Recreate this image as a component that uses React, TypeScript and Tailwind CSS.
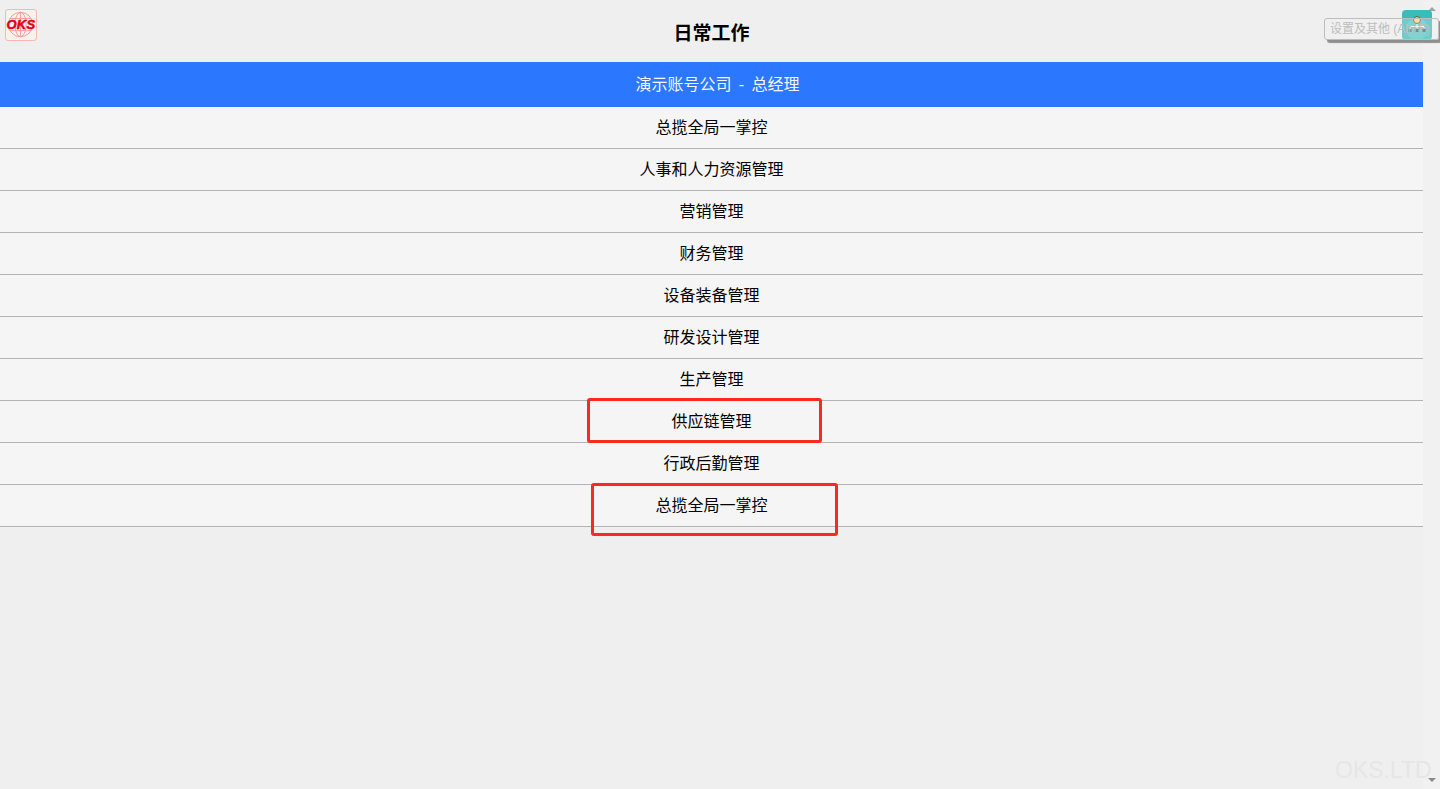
const FONT = "font-['Liberation_Sans','Noto_Sans_CJK_SC',sans-serif]"

const menuItems = [
  '总揽全局一掌控',
  '人事和人力资源管理',
  '营销管理',
  '财务管理',
  '设备装备管理',
  '研发设计管理',
  '生产管理',
  '供应链管理',
  '行政后勤管理',
  '总揽全局一掌控',
]

function Logo() {
  return (
    <div className="relative h-[32px] w-[32px] overflow-hidden rounded-[3px] border border-[#f8b8b0] bg-[#f6f2f0]">
      <svg viewBox="0 0 32 32" className="absolute inset-0 h-full w-full" fill="none" stroke="#f19a9a" strokeWidth="1">
        <circle cx="15.5" cy="15.5" r="13" />
        <ellipse cx="15.5" cy="15.5" rx="6" ry="13" />
        <path d="M15.5 2.5v26M4 9h23M4 22h23" />
      </svg>
      <span className="absolute inset-x-0 top-[7px] text-center font-['Liberation_Sans'] text-[13px] leading-[16px] font-bold italic tracking-[0.3px] text-[#e60012] [-webkit-text-stroke:0.5px_#e60012]">
        OKS
      </span>
    </div>
  )
}

function HelperIcon() {
  return (
    <svg viewBox="0 0 30 30" className="absolute left-[1402px] top-[10px] h-[30px] w-[30px]" fill="none">
      <rect width="30" height="30" rx="4" fill="#2db8b8" fillOpacity="0.95" />
      <circle cx="15" cy="19" r="11" fill="#62caca" fillOpacity="0.6" />
      <circle cx="15" cy="10" r="3.5" fill="#f6d67a" stroke="#6b5a2a" strokeWidth="1" />
      <path d="M15 14v2M8 16.5h14M8 17v2M15 17v2M22 17v2" stroke="#fff" strokeWidth="1" />
      <path d="M6.5 19h3v3h-3zM13.5 19h3v3h-3zM20.5 19h3v3h-3z" fill="#37474f" fillOpacity="0.8" />
    </svg>
  )
}

export default function App() {
  return (
    <div className={`relative flex h-[789px] w-[1440px] overflow-hidden bg-[#efefef] ${FONT}`}>
      {/* Page */}
      <div className="w-[1423px]">
        <header className="grid h-[62px] grid-cols-[1fr_auto_1fr] items-center">
          <div className="self-start pt-[9px] pl-[5px]">
            <Logo />
          </div>
          <h1 className="pt-[6px] text-[19px] font-bold text-black">日常工作</h1>
        </header>

        <div className="flex h-[45px] items-center justify-center bg-[#2b78ff] pl-[12px] text-[16px] text-[#f2f6ff]">
          演示账号公司<span className="mx-[3px] whitespace-pre"> - </span>总经理
        </div>

        <ul>
          {menuItems.map((item, i) => (
            <li
              key={i}
              className="flex h-[42px] items-center justify-center border-b border-[#b3b3b3] bg-[#f5f5f5] text-[16px] text-black"
            >
              {item}
            </li>
          ))}
        </ul>
      </div>

      {/* Scrollbar */}
      <div className="flex w-[17px] flex-col items-center justify-between bg-[#f1f1f1] pt-[7px] pb-[7px]">
        <div className="h-0 w-0 border-x-[4px] border-b-[4px] border-x-transparent border-b-[#a3a3a3]" />
        <div className="h-0 w-0 border-x-[4px] border-t-[4px] border-x-transparent border-t-[#8a8a8a]" />
      </div>

      {/* Tooltip */}
      <HelperIcon />
      <div className="absolute left-[1324px] top-[18px] flex h-[22px] w-[115px] items-center rounded-[3px] border border-[#bdbdbd] bg-[#f3f3f3]/30 pl-[5px] text-[12px] whitespace-nowrap text-[#bdbdbd] shadow-[3px_3px_1px_#8e8e8e]">
        设置及其他 (Alt+F)
      </div>

      {/* Red annotation boxes */}
      <div className="absolute left-[587px] top-[398px] h-[45px] w-[235px] rounded-[3px] border-[3px] border-[#fb2a1e]" />
      <div className="absolute left-[591px] top-[483px] h-[53px] w-[247px] rounded-[3px] border-[3px] border-[#fb2a1e]" />

      {/* Watermark */}
      <div className="absolute left-[1335px] top-[755px] text-[23px] leading-[30px] text-[#e6e6e6]">OKS.LTD</div>
    </div>
  )
}
